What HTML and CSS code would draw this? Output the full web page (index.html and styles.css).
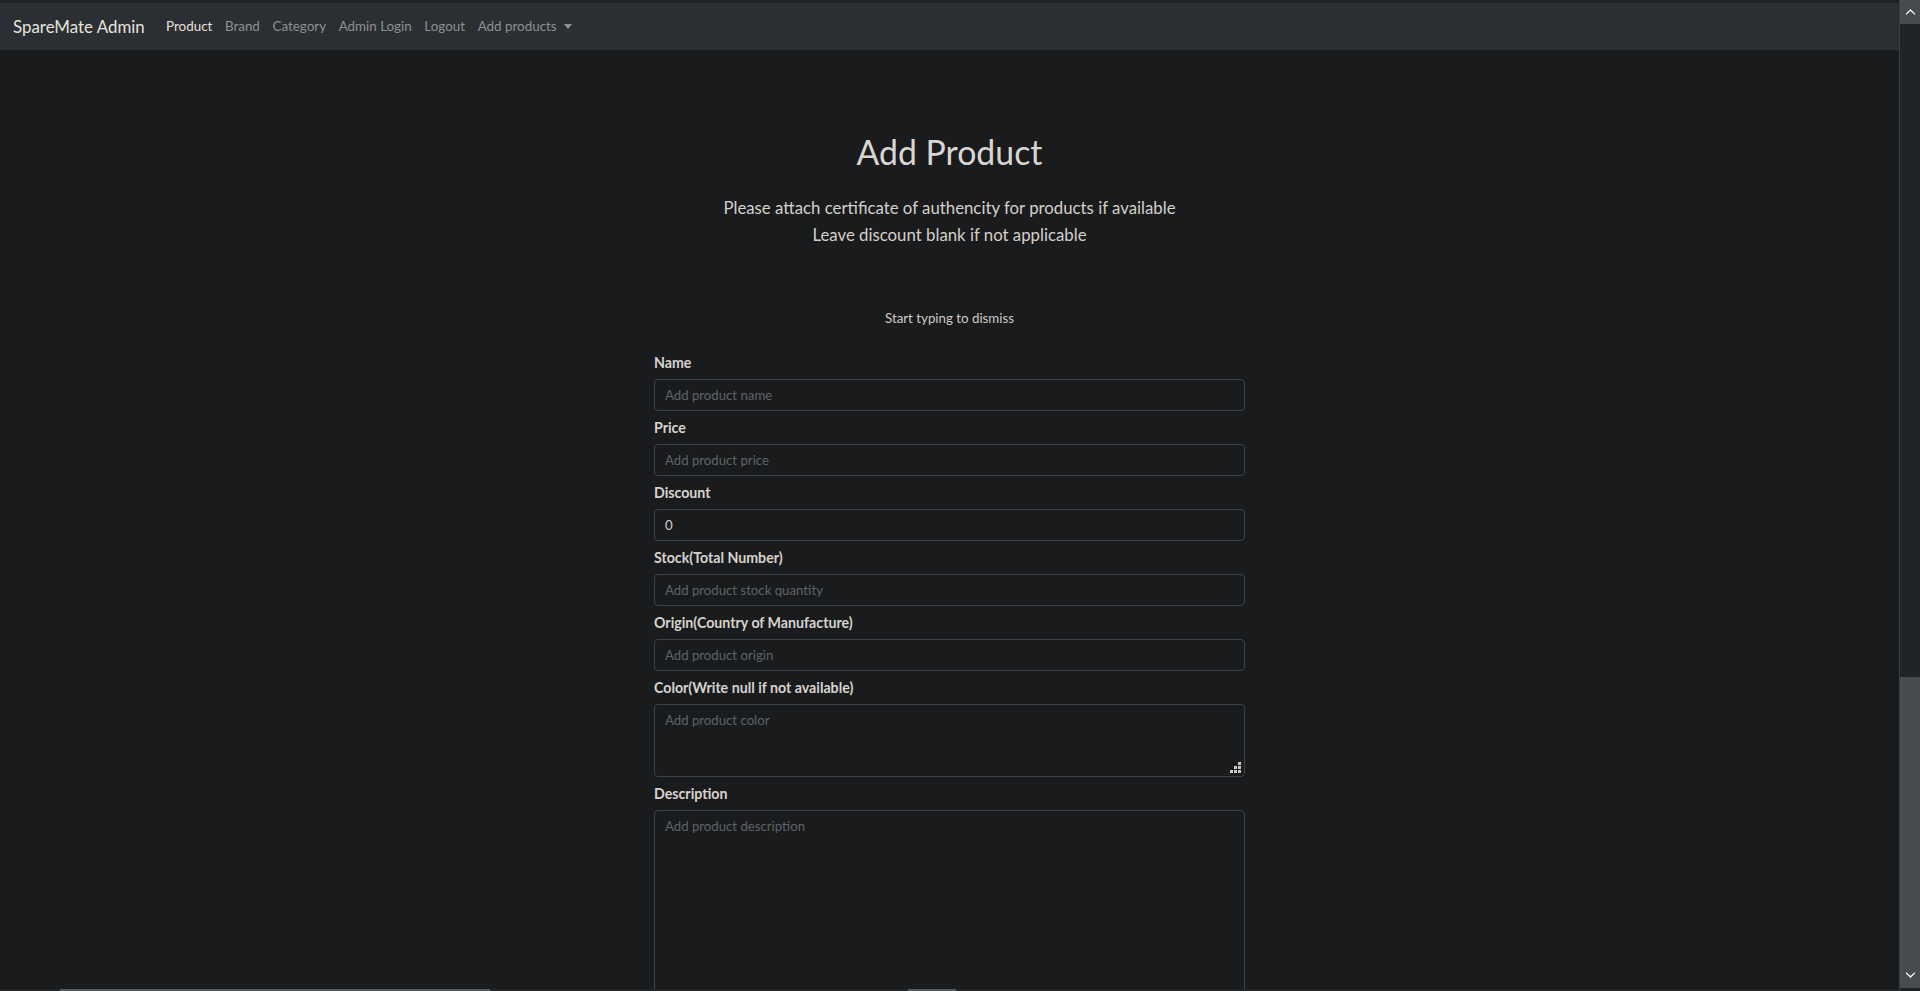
FILE: index.html
```html
<!DOCTYPE html>
<html lang="en">
<head>
<meta charset="utf-8">
<title>SpareMate Admin</title>
<link rel="stylesheet" href="styles.css">
</head>
<body>
<nav class="navbar">
  <a class="brand" href="#">SpareMate Admin</a>
  <ul class="nav">
    <li class="nav-link active">Product</li>
    <li class="nav-link">Brand</li>
    <li class="nav-link">Category</li>
    <li class="nav-link">Admin Login</li>
    <li class="nav-link">Logout</li>
    <li class="nav-link dropdown">Add products <span class="caret"></span></li>
  </ul>
</nav>
<main class="page">
  <h1 class="title">Add Product</h1>
  <p class="lead">Please attach certificate of authencity for products if available<br>Leave discount blank if not applicable</p>
  <p class="hint">Start typing to dismiss</p>
  <form class="form">
    <div class="field"><label class="label">Name</label><input class="control" type="text" placeholder="Add product name"></div>
    <div class="field"><label class="label">Price</label><input class="control" type="text" placeholder="Add product price"></div>
    <div class="field"><label class="label">Discount</label><input class="control" type="text" value="0"></div>
    <div class="field"><label class="label">Stock(Total Number)</label><input class="control" type="text" placeholder="Add product stock quantity"></div>
    <div class="field"><label class="label">Origin(Country of Manufacture)</label><input class="control" type="text" placeholder="Add product origin"></div>
    <div class="field"><label class="label">Color(Write null if not available)</label>
      <div class="area-wrap"><textarea class="control area-sm" placeholder="Add product color"></textarea>
        <svg class="grip" width="12" height="12" viewBox="0 0 12 12"><rect x="8" y="0" width="3" height="3"/><rect x="4" y="4" width="3" height="3"/><rect x="8" y="4" width="3" height="3"/><rect x="0" y="8" width="3" height="3"/><rect x="4" y="8" width="3" height="3"/><rect x="8" y="8" width="3" height="3"/></svg>
      </div>
    </div>
    <div class="field"><label class="label">Description</label><textarea class="control area-lg" placeholder="Add product description"></textarea></div>
  </form>
</main>
<div class="vscroll">
  <div class="sb-btn"><svg width="9" height="6" viewBox="0 0 9 6"><polygon points="4.5,0 9,4.5 9,6 4.5,2 0,6 0,4.5" fill="#fff"/></svg></div>
  <div class="sb-track"></div>
  <div class="sb-thumb"><svg width="9" height="6" viewBox="0 0 9 6"><polygon points="0,0 4.5,4 9,0 9,1.5 4.5,6 0,1.5" fill="#fff"/></svg></div>
</div>
<div class="hbar"><span class="hseg hseg-a"></span><span class="hseg hseg-b"></span></div>
</body>
</html>
```
FILE: styles.css
```css
* { box-sizing: border-box; }
html, body { margin: 0; padding: 0; height: 100%; }
body {
  background: #1a1b1d;
  color: #d8d5d0;
  font-family: Lato, "Open Sans", sans-serif;
  font-size: 14.4px;
  line-height: 1.5;
  overflow: hidden;
}
.navbar {
  display: flex;
  align-items: center;
  height: 50px;
  border-top: 3px solid #1f2123;
  background: #2b2f33;
  padding: 0 12px 0 13px;
}
.brand {
  color: #e6e3de;
  text-decoration: none;
  font-size: 16.9px;
  margin-right: 15px;
}
.nav {
  display: flex;
  list-style: none;
  margin: 0;
  padding: 0;
}
.nav-link {
  padding: 0 6.3px;
  color: #8e8f90;
  font-size: 13.4px;
}
.nav-link.active { color: #e6e3de; }
.dropdown { display: flex; align-items: center; }
.caret {
  display: inline-block;
  margin-left: 7px;
  border-top: 5px solid #8e8f90;
  border-left: 4.5px solid transparent;
  border-right: 4.5px solid transparent;
}
.page {
  width: calc(100% - 21px);
  display: flex;
  flex-direction: column;
  align-items: center;
}
.title {
  margin: 81px 0 0;
  font-size: 33.8px;
  font-weight: 400;
  line-height: 42px;
  color: #d9d6d1;
}
.lead {
  margin: 21px 0 0;
  font-size: 16.8px;
  line-height: 27px;
  text-align: center;
  color: #d4d0ca;
}
.hint {
  margin: 61px 0 0;
  font-size: 13.3px;
  line-height: 19px;
  color: #cfcbc5;
}
.form {
  width: 591px;
  margin-top: 24.3px;
  display: flex;
  flex-direction: column;
  gap: 6px;
}
.field { display: flex; flex-direction: column; }
.label {
  font-weight: 700;
  font-size: 14.2px;
  line-height: 21.6px;
  margin-bottom: 5.4px;
  color: #d6d3ce;
}
.control {
  width: 100%;
  height: 32px;
  background: #1a1b1d;
  border: 1px solid #3d4246;
  border-radius: 4px;
  padding: 0 10px;
  font-family: Lato, "Open Sans", sans-serif;
  font-size: 13.2px;
  color: #d6d3ce;
  outline: none;
}
.control::placeholder { color: #5e6367; }
textarea.control {
  display: block;
  resize: none;
  padding: 6px 10px;
  line-height: 1.5;
}
.area-sm { height: 73px; }
.area-lg { height: 260px; }
.area-wrap { position: relative; }
.grip {
  position: absolute;
  right: 3px;
  bottom: 3px;
  fill: #c9c9c9;
}
.vscroll {
  position: fixed;
  top: 0;
  right: 0;
  width: 21px;
  height: 100%;
  border-left: 1px solid #3b3f42;
  background: #202427;
  display: flex;
  flex-direction: column;
}
.sb-btn {
  height: 24px;
  background: #474c50;
  display: flex;
  align-items: center;
  justify-content: center;
}
.sb-track { flex: 1; background: #202427; }
.sb-thumb {
  height: 314px;
  background: #474c50;
  display: flex;
  align-items: flex-end;
  justify-content: center;
  padding-bottom: 10px;
  border-bottom: 3px solid #202427;
}
.hbar {
  position: fixed;
  left: 0;
  bottom: 0;
  width: calc(100% - 21px);
  height: 2px;
  background: #222426;
}
.hseg { position: absolute; top: 0; height: 2px; background: #55595c; }
.hseg-a { left: 60px; width: 430px; }
.hseg-b { left: 908px; width: 48px; }
```
